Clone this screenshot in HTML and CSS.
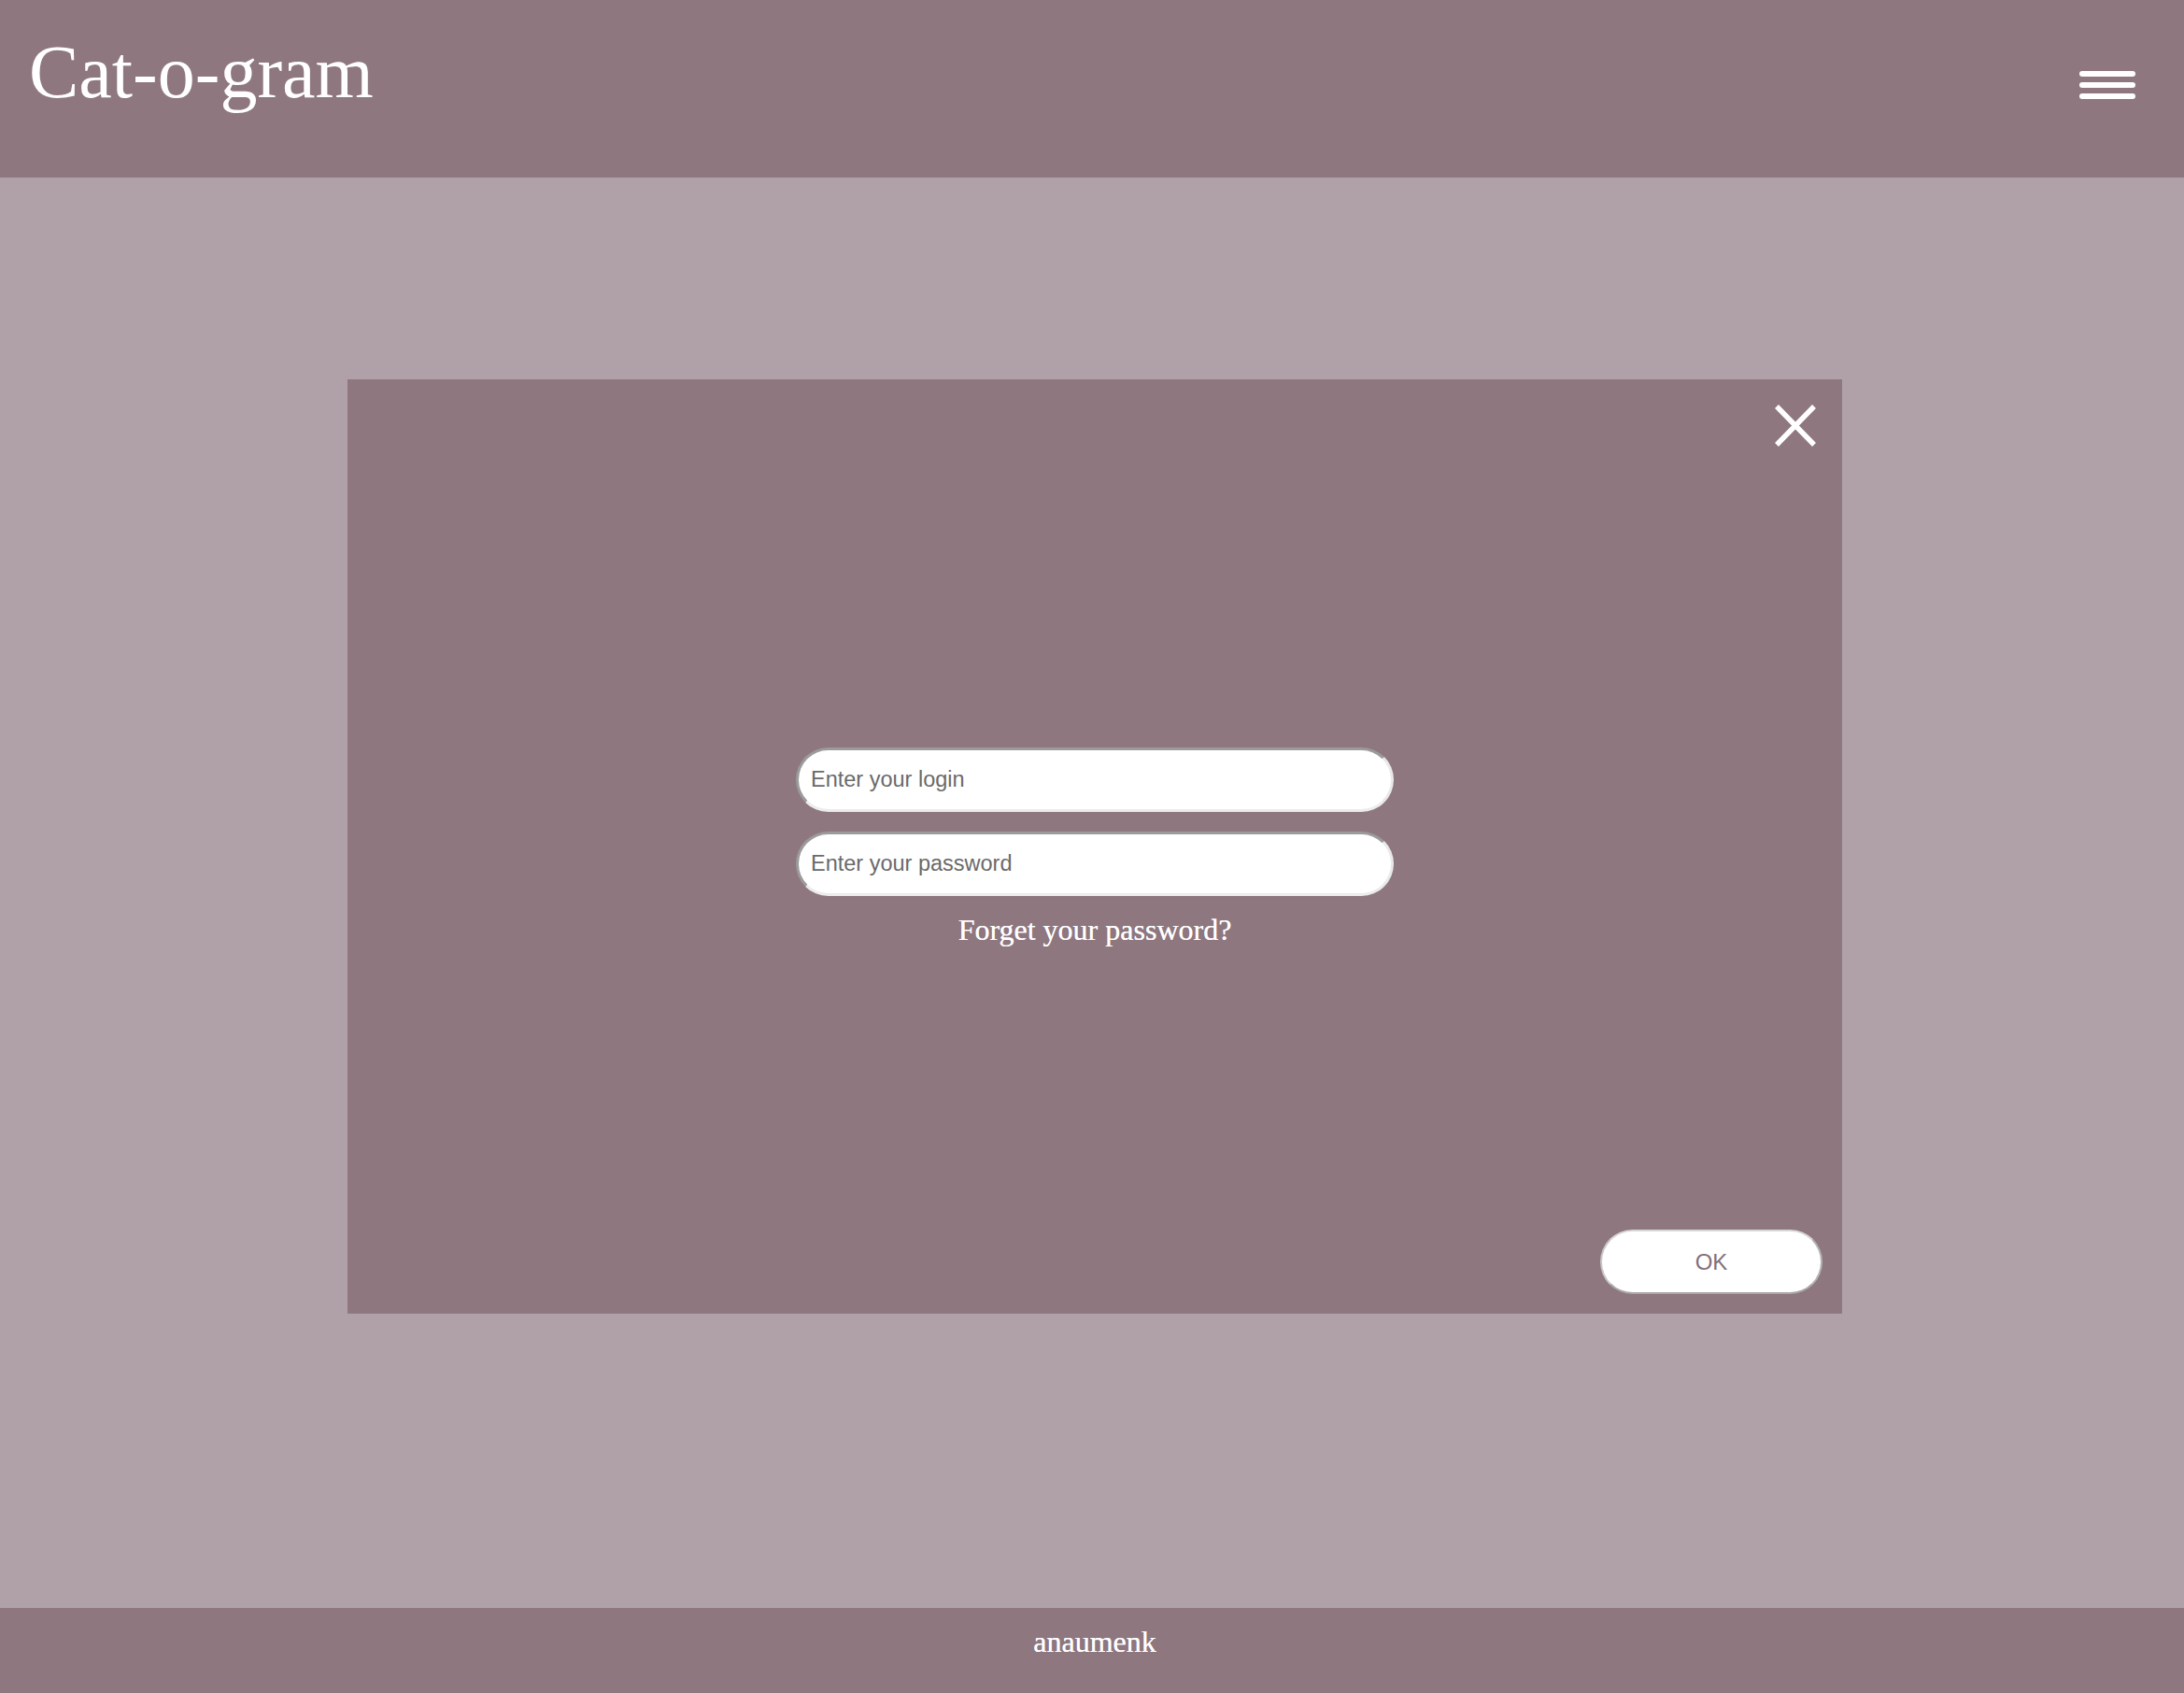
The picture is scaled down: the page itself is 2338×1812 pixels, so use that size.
FILE: index.html
```html
<!DOCTYPE html>
<html lang="en">
<head>
<meta charset="utf-8">
<title>Cat-o-gram</title>
<link rel="stylesheet" href="styles.css">
</head>
<body>
<header class="site-header">
  <h1 class="logo">Cat-o-gram</h1>
  <button class="burger" aria-label="Menu">
    <span class="burger-bar"></span>
    <span class="burger-bar"></span>
    <span class="burger-bar"></span>
  </button>
</header>
<main class="site-main">
  <section class="modal">
    <button class="close" aria-label="Close">
      <svg width="44" height="45" viewBox="0 0 44 45"><path d="M2 2 L42 43 M42 2 L2 43" stroke="#fff" stroke-width="5.5" fill="none"/></svg>
    </button>
    <form class="login">
      <input class="field" type="text" placeholder="Enter your login">
      <input class="field" type="password" placeholder="Enter your password">
      <a class="forget" href="#">Forget your password?</a>
    </form>
    <button class="ok" type="button">OK</button>
  </section>
</main>
<footer class="site-footer">anaumenk</footer>
</body>
</html>
```

FILE: styles.css
```css
html, body {
  margin: 0;
  padding: 0;
}
body {
  min-height: 100vh;
  display: flex;
  flex-direction: column;
  background: #afa1a7;
  font-family: "Liberation Serif", "Times New Roman", serif;
  color: #fff;
}
.site-header {
  height: 190px;
  box-sizing: border-box;
  background: #8f7780;
  display: flex;
  justify-content: space-between;
  align-items: flex-start;
  padding: 33px 52px 0 31px;
}
.logo {
  margin: 0;
  font-weight: normal;
  font-size: 80px;
  line-height: 89px;
  color: #fff;
}
.burger {
  margin-top: 43px;
  width: 60px;
  padding: 0;
  border: 0;
  background: none;
  display: flex;
  flex-direction: column;
  gap: 6px;
}
.burger-bar {
  display: block;
  height: 6px;
  border-radius: 3px;
  background: #fff;
}
.site-main {
  flex: 1;
  padding: 216px 0 0 6px;
}
.modal {
  width: 1600px;
  height: 1000px;
  margin: 0 auto;
  background: #8f7780;
  display: grid;
  grid-template: 1fr / 1fr;
}
.modal > * {
  grid-area: 1 / 1;
}
.close {
  align-self: start;
  justify-self: end;
  margin: 27px 28px 0 0;
  padding: 0;
  border: 0;
  background: none;
  width: 44px;
  height: 45px;
  line-height: 0;
}
.login {
  align-self: center;
  justify-self: center;
  width: 640px;
  display: flex;
  flex-direction: column;
  align-items: center;
  gap: 21px;
  margin-top: 2px;
}
.field {
  width: 640px;
  height: 69px;
  box-sizing: border-box;
  border-radius: 35px;
  border: 3px solid;
  border-color: #9b9b9b #e9e9e9 #ececec #9b9b9b;
  background: #fff;
  padding: 0 10px 0 13px;
  font-family: "Liberation Sans", Arial, sans-serif;
  font-size: 23.5px;
  outline: none;
}
.field::placeholder {
  color: #6a6a6a;
}
.forget {
  margin-top: -3px;
  font-size: 32px;
  color: #fff;
  text-decoration: none;
  text-shadow: 0 0 0.4px #fff;
}
.ok {
  align-self: end;
  justify-self: end;
  margin: 0 21px 21px 0;
  width: 238px;
  height: 69px;
  box-sizing: border-box;
  border-radius: 35px;
  border: 2px solid;
  border-color: #d6d6d6 #b4b4b4 #a9a9a9 #c9c9c9;
  background: #fff;
  font-family: "Liberation Sans", Arial, sans-serif;
  font-size: 24px;
  color: #83707a;
}
.site-footer {
  height: 91px;
  box-sizing: border-box;
  padding: 18px 0 0 6px;
  background: #8f7780;
  text-align: center;
  font-size: 32px;
  color: #fff;
  text-shadow: 0 0 0.4px #fff;
}
```
